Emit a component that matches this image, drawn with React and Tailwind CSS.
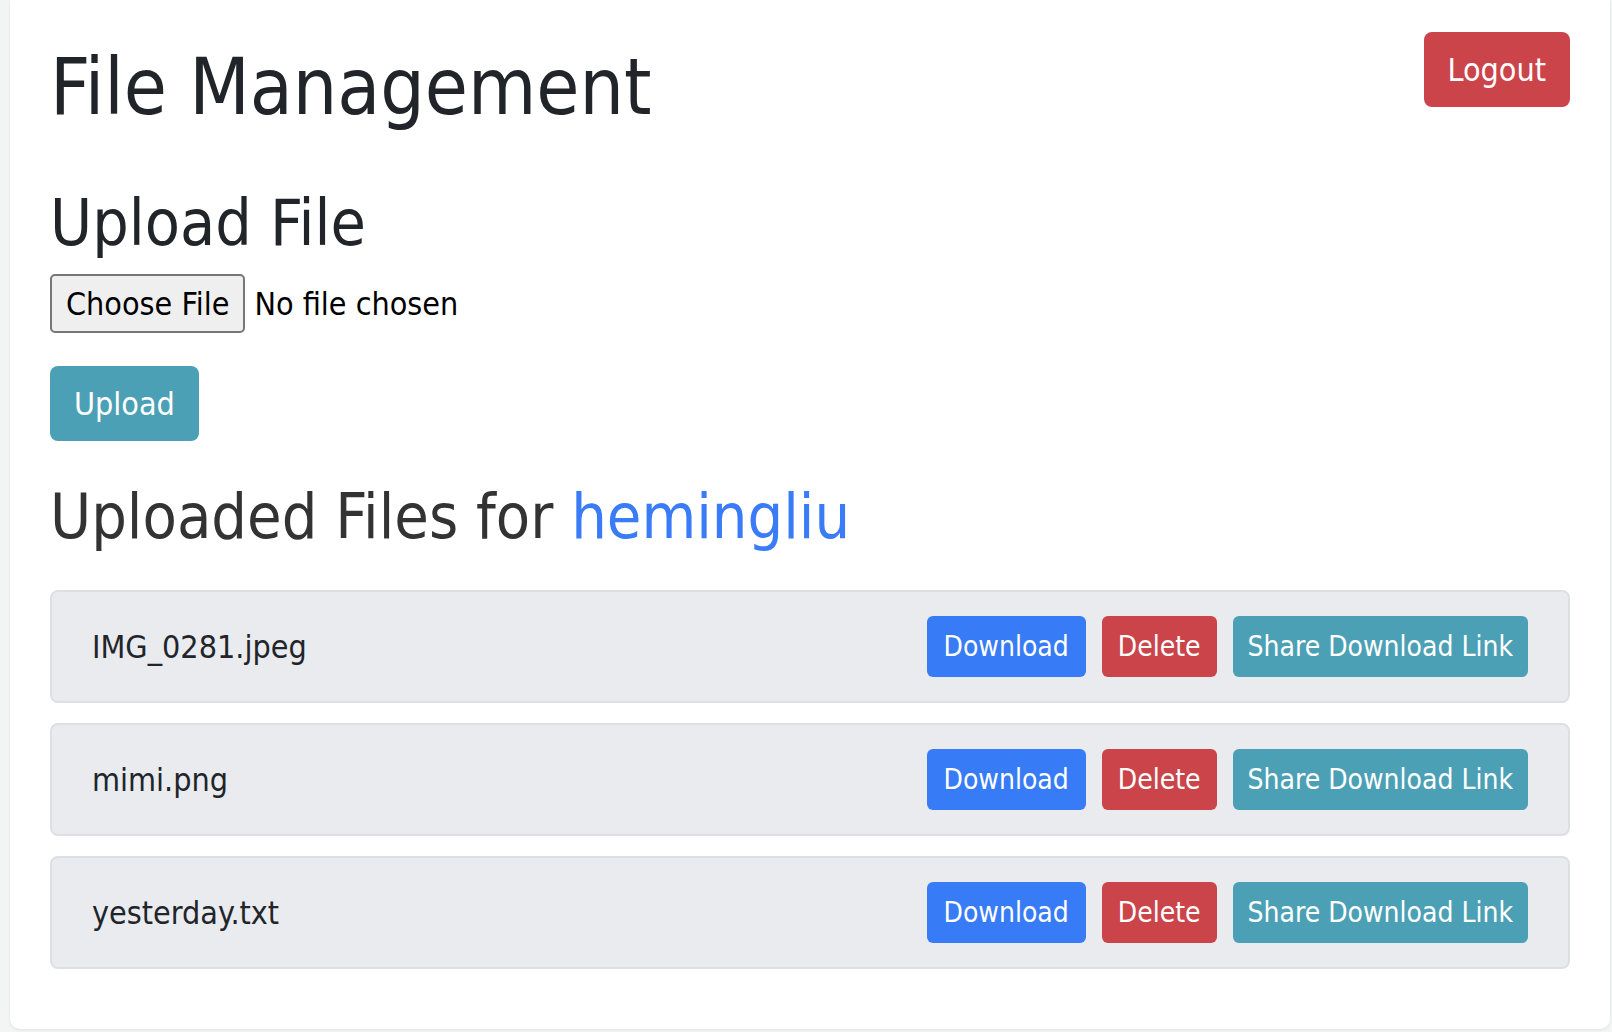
import React from 'react'

const FILES = ['IMG_0281.jpeg', 'mimi.png', 'yesterday.txt']

export default function App() {
  return (
    <div className="min-h-[1032px] bg-[#f3f4f4] text-[#212529] [font-family:'DejaVu_Sans_Condensed','DejaVu_Sans',sans-serif]">
      <div className="ml-[10px] w-[1600px] bg-white rounded-b-[10px] shadow-[0_1px_3px_rgba(0,0,0,0.08)] px-[40px] pt-[32px] pb-[60px]">
        {/* header */}
        <div className="flex justify-between items-start">
          <h1 className="mt-[7px] text-[78px] leading-[96px] font-normal">File Management</h1>
          <button className="h-[75px] px-[24px] rounded-[8px] bg-[#cb444a] text-white text-[32px] leading-[48px]">
            Logout
          </button>
        </div>

        {/* upload */}
        <h2 className="mt-[50px] text-[64px] leading-[77px]">Upload File</h2>
        <div className="mt-[12px] flex items-center h-[59px]">
          <span className="h-[59px] px-[14px] flex items-center border-2 border-[#767676] rounded-[5px] bg-[#efefef] text-black text-[32px]">
            Choose File
          </span>
          <span className="ml-[9px] text-[32px] text-black">No file chosen</span>
        </div>
        <button className="mt-[33px] h-[75px] px-[24px] rounded-[8px] bg-[#4ca0b5] text-white text-[32px] leading-[48px]">
          Upload
        </button>

        {/* list */}
        <h2 className="mt-[37px] text-[62.5px] leading-[77px] text-[#333]">
          Uploaded Files for <span className="text-[#3a7bf7]">hemingliu</span>
        </h2>
        <div className="mt-[35px] flex flex-col gap-[20px]">
          {FILES.map((f) => (
            <div key={f} className="flex items-center justify-between border-2 border-[#dcdfe3] bg-[#e9ebef] rounded-[8px] px-[40px] py-[24px]">
              <span className="text-[32px]">{f}</span>
              <div className="flex gap-[16px]">
                <button className="h-[61px] px-[17px] rounded-[6px] bg-[#387bf6] text-white text-[28px]">Download</button>
                <button className="h-[61px] px-[16px] rounded-[6px] bg-[#cb444a] text-white text-[28px]">Delete</button>
                <button className="h-[61px] px-[15px] rounded-[6px] bg-[#4ca0b5] text-white text-[28px]">Share Download Link</button>
              </div>
            </div>
          ))}
        </div>
      </div>
    </div>
  )
}
